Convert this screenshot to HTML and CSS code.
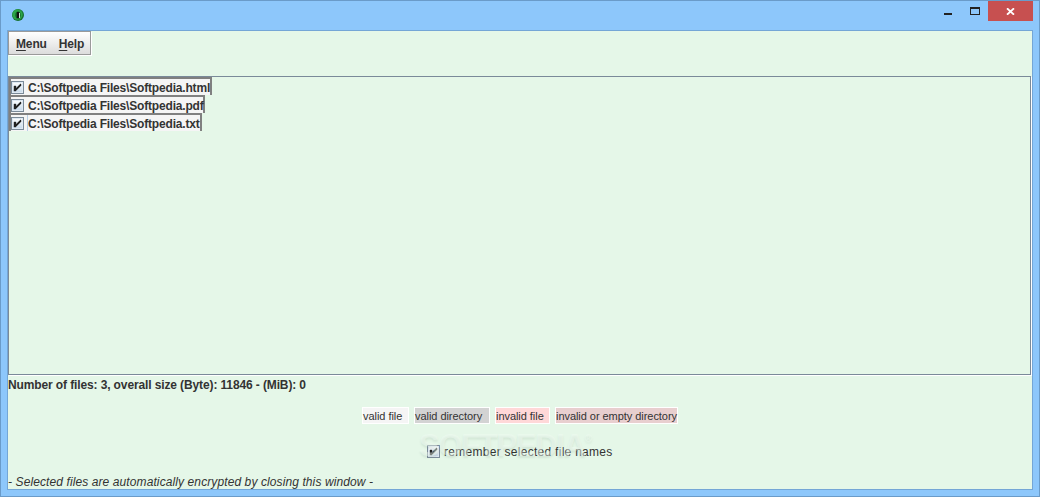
FILE: index.html
```html
<!DOCTYPE html>
<html lang="en">
<head>
    <meta charset="UTF-8">
    <meta name="viewport" content="width=device-width, initial-scale=1.0">
    <title>File Encryption</title>
    <link rel="stylesheet" href="styles.css">
</head>
<body>
    <div class="window">
        <div class="titlebar">
            <svg class="app-icon" width="12" height="12" viewBox="0 0 12 12">
                <circle cx="6" cy="6" r="6" fill="#17702f"/>
                <circle cx="5.5" cy="5.5" r="5.2" fill="#2ca548"/>
                <ellipse cx="6" cy="6.2" rx="2.6" ry="3.6" fill="#125c25"/>
                <rect x="5" y="4" width="3" height="5" fill="#d5e5d6"/>
                <rect x="5" y="3" width="2" height="6" fill="#111"/>
            </svg>
            <div class="window-buttons">
                <div class="minimize"></div>
                <div class="maximize"></div>
                <div class="close">
                    <svg width="9" height="7" viewBox="0 0 9 7">
                        <path d="M1 0.3L8 6.7M8 0.3L1 6.7" stroke="#fff" stroke-width="1.8"/>
                    </svg>
                </div>
            </div>
        </div>

        <div class="content">
            <div class="menubar">
                <span class="menu"><u>M</u>enu</span>
                <span class="help"><u>H</u>elp</span>
            </div>

            <div class="file-list">
                <div class="file html">
                    <span class="checkbox"><svg width="7" height="7" viewBox="0 0 7 7"><path d="M0 2h2v2h1v-1h1v-1h1v-1h1v-1h1v2h-1v1h-1v1h-1v1h-1v1h-1v1h-2z"/></svg></span>
                    <span class="name">C:\Softpedia Files\Softpedia.html</span>
                </div>
                <div class="file pdf">
                    <span class="checkbox"><svg width="7" height="7" viewBox="0 0 7 7"><path d="M0 2h2v2h1v-1h1v-1h1v-1h1v-1h1v2h-1v1h-1v1h-1v1h-1v1h-1v1h-2z"/></svg></span>
                    <span class="name">C:\Softpedia Files\Softpedia.pdf</span>
                </div>
                <div class="file txt">
                    <span class="checkbox"><svg width="7" height="7" viewBox="0 0 7 7"><path d="M0 2h2v2h1v-1h1v-1h1v-1h1v-1h1v2h-1v1h-1v1h-1v1h-1v1h-1v1h-2z"/></svg></span>
                    <span class="name focused">C:\Softpedia Files\Softpedia.txt</span>
                </div>
            </div>

            <div class="summary">Number of files: 3, overall size (Byte): 11846 - (MiB): 0</div>

            <div class="legend">
                <span class="tag valid-file">valid file</span>
                <span class="tag valid-dir">valid directory</span>
                <span class="tag invalid-file">invalid file</span>
                <span class="tag invalid-dir">invalid or empty directory</span>
            </div>

            <div class="remember">
                <span class="checkbox"><svg width="7" height="7" viewBox="0 0 7 7"><path d="M0 2h2v2h1v-1h1v-1h1v-1h1v-1h1v2h-1v1h-1v1h-1v1h-1v1h-1v1h-2z"/></svg></span>
                <span class="remember-label">remember selected file names</span>
                <div class="watermark">SOFTPEDIA<sup>®</sup></div>
            </div>

            <div class="hint">- Selected files are automatically encrypted by closing this window -</div>
        </div>
    </div>
</body>
</html>
```
FILE: styles.css
```css
* {
    margin: 0;
    padding: 0;
    box-sizing: border-box;
}

body {
    font-family: "Liberation Sans", Arial, sans-serif;
    font-size: 12px;
    color: #333;
    overflow: hidden;
}

.window {
    width: 1040px;
    height: 497px;
    background-color: #8dc7fb;
    border: 1px solid #6a9bc9;
    padding: 0 6px 6px 6px;
}

.titlebar {
    height: 29px;
    display: flex;
    justify-content: space-between;
}

.app-icon {
    margin: 8px 0 0 5px;
}

.window-buttons {
    display: flex;
}

.minimize {
    width: 8px;
    height: 2px;
    margin-top: 12px;
    background-color: #222;
}

.maximize {
    width: 10px;
    height: 8px;
    margin: 6px 8px 0 18px;
    border: 1px solid #222;
    border-top-width: 2px;
}

.close {
    width: 45px;
    height: 20px;
    background-color: #c75050;
    display: flex;
    align-items: center;
    justify-content: center;
}

.content {
    width: 1026px;
    height: 460px;
    background-color: #e5f7e8;
    border: 1px solid #74a6d6;
    display: flex;
    flex-direction: column;
}

.menubar {
    width: 83px;
    height: 24px;
    display: flex;
    gap: 12px;
    padding-left: 7px;
    line-height: 24px;
    font-weight: bold;
    letter-spacing: -0.15px;
    background: linear-gradient(#fff, #dcdcdc);
    border: 1px solid #9a9a9a;
    box-shadow: 1px 1px 0 #fff;
}

.menubar u {
    text-underline-offset: 2px;
}

.file-list {
    width: 1023px;
    height: 299px;
    margin-top: 21px;
    border: 1px solid #7a8a99;
    box-shadow: 1px 1px 0 #fff;
}

.file {
    height: 18px;
    display: flex;
    align-items: center;
    background-color: #f5f5f5;
    border: 2px solid #808080;
    border-bottom: 0;
    font-weight: bold;
    letter-spacing: -0.18px;
}

.file.html {
    width: 203px;
}

.file.pdf {
    width: 196px;
}

.file.txt {
    width: 193px;
}

.checkbox {
    width: 13px;
    height: 13px;
    flex: none;
    display: flex;
    align-items: center;
    justify-content: center;
    border: 1px solid #7a8a99;
    background: linear-gradient(#fff, #c4d8ea);
    box-shadow: inset 0 0 0 1px #dfe9f3;
}

.checkbox svg {
    overflow: visible;
}

.checkbox path {
    fill: #222;
    stroke: #222;
    stroke-width: 0.4;
}

.name {
    height: 16px;
    line-height: 18px;
    margin-left: 3px;
    padding-left: 1px;
    white-space: nowrap;
}

.name.focused {
    border-left: 1px solid #b8cfe5;
    padding-left: 0;
}

.summary {
    height: 20px;
    line-height: 20px;
    font-weight: bold;
    letter-spacing: -0.12px;
}

.legend {
    display: flex;
    justify-content: center;
    gap: 5px;
    margin: 12px 0 0 0;
    font-size: 11px;
    letter-spacing: -0.05px;
}

.tag {
    height: 17px;
    line-height: 17px;
    border: 1px solid #fff;
    white-space: nowrap;
}

.valid-file {
    width: 47px;
    background-color: #f5f5f5;
}

.valid-dir {
    width: 76px;
    background-color: #d3d3d3;
}

.invalid-file {
    width: 55px;
    background-color: #ffd8d8;
}

.invalid-dir {
    width: 123px;
    background-color: #e8cfcf;
}

.remember {
    position: relative;
    display: flex;
    align-items: center;
    height: 19px;
    margin: 18px 0 0 419px;
}

.remember-label {
    margin-left: 4px;
    letter-spacing: 0.28px;
}

/* logo stamped over the checkbox row */
.watermark {
    position: absolute;
    left: -8px;
    top: -14px;
    font-size: 31px;
    line-height: 36px;
    font-weight: bold;
    letter-spacing: -1.3px;
    color: rgba(242, 252, 244, 0.45);
    text-shadow: 0 2px 2px rgba(110, 140, 120, 0.14);
}

.watermark sup {
    font-size: 10px;
    vertical-align: 14px;
    line-height: 0;
}

.hint {
    margin-top: auto;
    height: 15px;
    line-height: 16px;
    font-style: italic;
    letter-spacing: 0.1px;
}
```
